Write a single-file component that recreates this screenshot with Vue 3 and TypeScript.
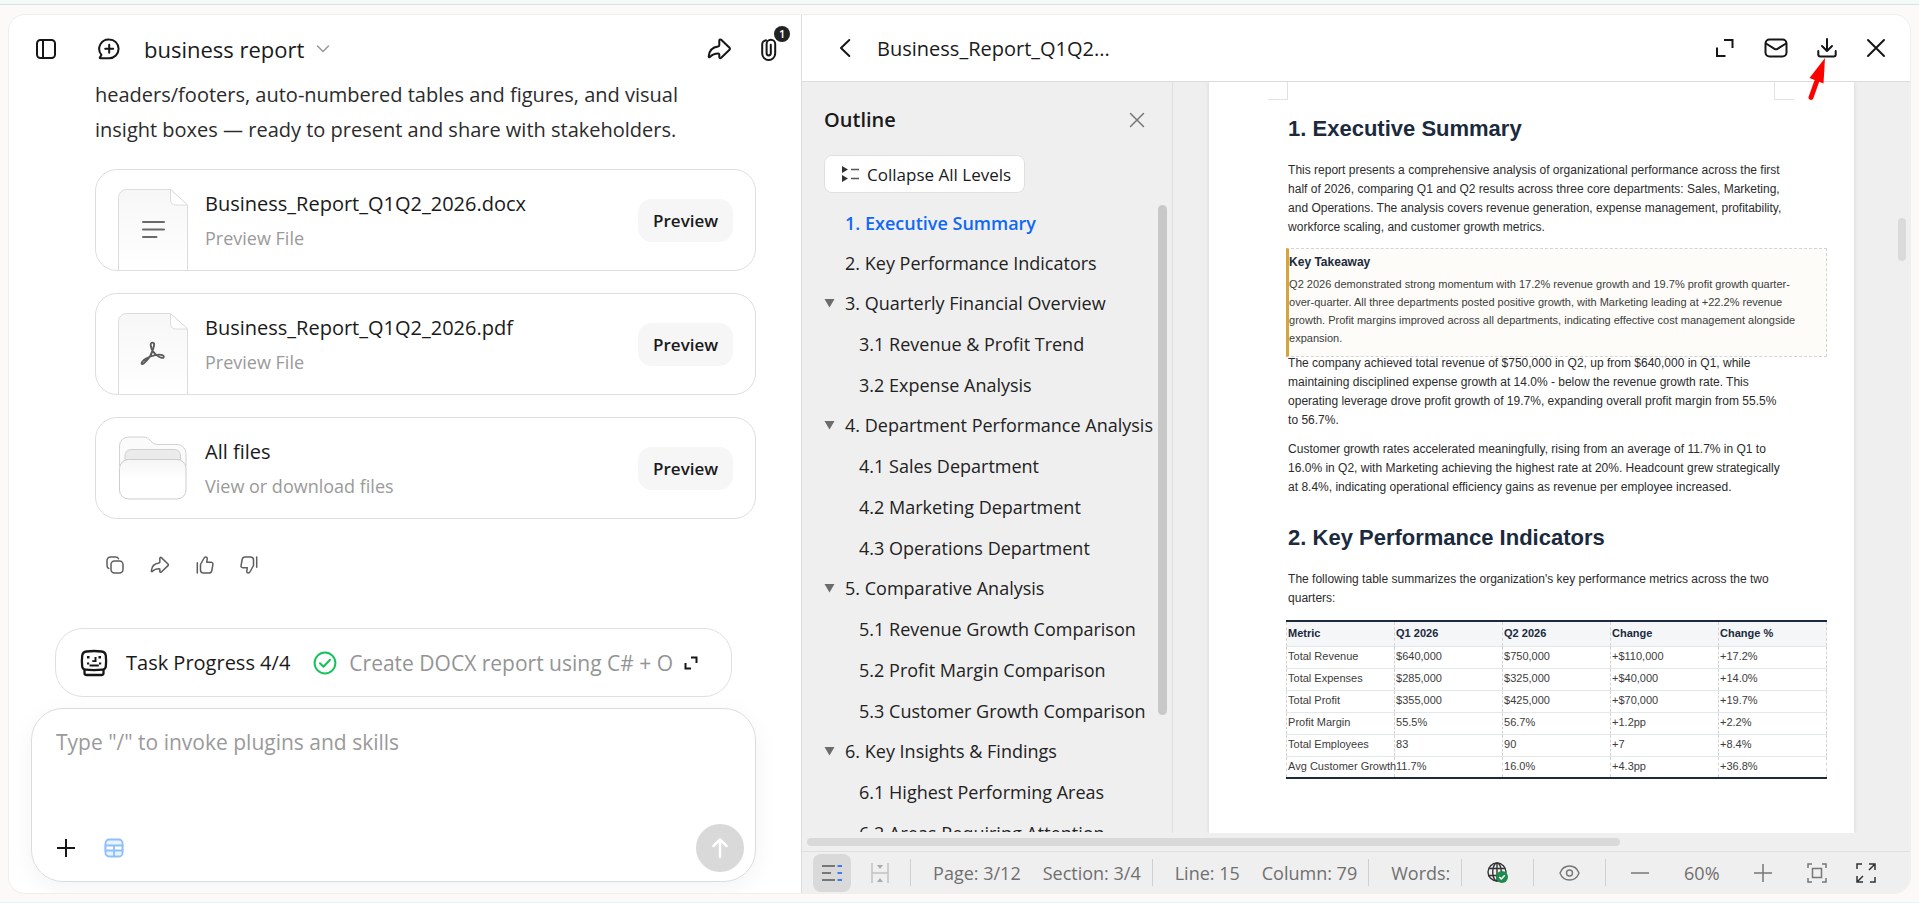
<script setup lang="ts">
import { ref } from 'vue'

interface FileCard {
  kind: 'doc' | 'pdf' | 'folder'
  name: string
  note: string
}

interface OutlineItem {
  label: string
  level: 1 | 2
  parent?: boolean
}

const files: FileCard[] = [
  { kind: 'doc', name: 'Business_Report_Q1Q2_2026.docx', note: 'Preview File' },
  { kind: 'pdf', name: 'Business_Report_Q1Q2_2026.pdf', note: 'Preview File' },
  { kind: 'folder', name: 'All files', note: 'View or download files' },
]

const outline: OutlineItem[] = [
  { label: '1. Executive Summary', level: 1 },
  { label: '2. Key Performance Indicators', level: 1 },
  { label: '3. Quarterly Financial Overview', level: 1, parent: true },
  { label: '3.1 Revenue & Profit Trend', level: 2 },
  { label: '3.2 Expense Analysis', level: 2 },
  { label: '4. Department Performance Analysis', level: 1, parent: true },
  { label: '4.1 Sales Department', level: 2 },
  { label: '4.2 Marketing Department', level: 2 },
  { label: '4.3 Operations Department', level: 2 },
  { label: '5. Comparative Analysis', level: 1, parent: true },
  { label: '5.1 Revenue Growth Comparison', level: 2 },
  { label: '5.2 Profit Margin Comparison', level: 2 },
  { label: '5.3 Customer Growth Comparison', level: 2 },
  { label: '6. Key Insights & Findings', level: 1, parent: true },
  { label: '6.1 Highest Performing Areas', level: 2 },
  { label: '6.2 Areas Requiring Attention', level: 2 },
]
const active = ref(0)
const prompt = ref('')

const introLines = [
  'This report presents a comprehensive analysis of organizational performance across the first',
  'half of 2026, comparing Q1 and Q2 results across three core departments: Sales, Marketing,',
  'and Operations. The analysis covers revenue generation, expense management, profitability,',
  'workforce scaling, and customer growth metrics.',
]
const takeawayLines = [
  'Q2 2026 demonstrated strong momentum with 17.2% revenue growth and 19.7% profit growth quarter-',
  'over-quarter. All three departments posted positive growth, with Marketing leading at +22.2% revenue',
  'growth. Profit margins improved across all departments, indicating effective cost management alongside',
  'expansion.',
]
const companyLines = [
  'The company achieved total revenue of $750,000 in Q2, up from $640,000 in Q1, while',
  'maintaining disciplined expense growth at 14.0% - below the revenue growth rate. This',
  'operating leverage drove profit growth of 19.7%, expanding overall profit margin from 55.5%',
  'to 56.7%.',
]
const customerLines = [
  'Customer growth rates accelerated meaningfully, rising from an average of 11.7% in Q1 to',
  '16.0% in Q2, with Marketing achieving the highest rate at 20%. Headcount grew strategically',
  'at 8.4%, indicating operational efficiency gains as revenue per employee increased.',
]
const tableLines = [
  "The following table summarizes the organization's key performance metrics across the two",
  'quarters:',
]
const columns = ['Metric', 'Q1 2026', 'Q2 2026', 'Change', 'Change %']
const rows = [
  ['Total Revenue', '$640,000', '$750,000', '+$110,000', '+17.2%'],
  ['Total Expenses', '$285,000', '$325,000', '+$40,000', '+14.0%'],
  ['Total Profit', '$355,000', '$425,000', '+$70,000', '+19.7%'],
  ['Profit Margin', '55.5%', '56.7%', '+1.2pp', '+2.2%'],
  ['Total Employees', '83', '90', '+7', '+8.4%'],
  ['Avg Customer Growth', '11.7%', '16.0%', '+4.3pp', '+36.8%'],
]
</script>

<template>
  <div class="shell">
    <div class="window">
      <section class="chat">
        <header class="chat-head">
          <button class="icon" aria-label="Toggle sidebar">
            <svg width="22" height="22" viewBox="0 0 22 22" class="line"><rect x="2" y="2" width="18" height="18" rx="3.5" /><path d="M8 2v18" /></svg>
          </button>
          <button class="icon new-chat" aria-label="New chat">
            <svg width="24" height="24" viewBox="0 0 24 24" class="line"><path d="M12.2 2.4a9.4 9.4 0 1 1 0 18.8H3.4c-.7 0-.8-.6-.4-1l1.2-1.7c.3-.4.2-.6 0-1A9.4 9.4 0 0 1 12.2 2.4z" /><path d="M12.2 7.8v8M8.2 11.8h8" /></svg>
          </button>
          <button class="title">
            business report
            <svg width="14" height="10" viewBox="0 0 14 10" class="line faint"><path d="M1.5 2l5.5 5.5L12.500 2" /></svg>
          </button>
          <span class="spacer"></span>
          <button class="icon" aria-label="Share">
            <svg width="25" height="22" viewBox="0 0 25 22" class="line"><path d="M14.200 1.800l8.300 8a1.400 1.400 0 0 1 0 2l-8.300 8c-.8.7-1.900.4-1.900-.7v-2.500c0-.7-.3-1-1-1-3.200 0-5.600.4-8.200 3.300-.7.8-1.500.5-1.400-.6.5-6 3.700-9.200 9.400-9.900.8-.1 1.200-.5 1.200-1.200V2.500c0-1 1.100-1.400 1.900-.7z" /></svg>
          </button>
          <button class="icon clip" aria-label="Attachments">
            <svg width="18" height="23" viewBox="0 0 18 23" class="line"><path d="M2.200 7v8.500a6.500 6.500 0 0 0 13 0V6a4.300 4.300 0 0 0-8.600 0v9.300a2.100 2.100 0 0 0 4.200 0V6.800M2.200 7a4.500 4.500 0 0 1 3.800-4.800" /></svg>
            <span class="badge">1</span>
          </button>
        </header>

        <div class="thread">
          <p class="message">headers/footers, auto-numbered tables and figures, and visual<br />insight boxes — ready to present and share with stakeholders.</p>

          <article v-for="file in files" :key="file.name" class="card">
            <div class="thumb" :class="{ folder: file.kind === 'folder' }">
              <svg v-if="file.kind !== 'folder'" width="70" height="81" viewBox="0 0 70 81">
                <defs>
                  <linearGradient :id="'sheet-' + file.kind" x1="0" y1="0" x2="0" y2="1"><stop offset="0" stop-color="#f7f7f7" /><stop offset="1" stop-color="#fff" /></linearGradient>
                </defs>
                <path d="M.5 84V8.500a8 8 0 0 1 8-8h44L69.500 16V84" :fill="'url(#sheet-' + file.kind + ')'" stroke="#dcdcdc" />
                <path d="M52.500.5V11a5 5 0 0 0 5 5h12z" fill="#fff" stroke="#dcdcdc" />
                <g v-if="file.kind === 'doc'" fill="none" stroke="#6a6a6a" stroke-width="2" stroke-linecap="round"><path d="M25 33h21M25 40.500h21M25 48h13.500" /></g>
                <path v-else fill="none" stroke="#5c5c5c" stroke-width="1.900" d="M32.500 42.500c1.600-3.600 3.200-7.500 3.600-10.500.4-3.200-3.700-3.200-3.400.1.400 4.200 3.700 9.200 8.700 11.900 4.300 2.200 5.800-.8 2.900-1.900-3.300-1.200-10.300.1-16.200 3.500-6 3.600-5.200 7.100-2.200 4.600 2.200-1.900 4.700-4.300 6.600-7.700z" />
              </svg>
              <svg v-else width="70" height="64" viewBox="0 0 70 64">
                <defs>
                  <linearGradient id="front" x1="0" y1="0" x2="0" y2="1"><stop offset="0" stop-color="#f5f5f5" /><stop offset=".5" stop-color="#fff" /></linearGradient>
                </defs>
                <path d="M1.500 30V10a9 9 0 0 1 9-9h15c3 0 4.500 1 6.500 3l2 2c2 2 3.500 2.500 6 2.500h19a9 9 0 0 1 9 9V30z" fill="#fbfbfb" stroke="#d2d2d2" />
                <path d="M7 24v-4c0-4 2.500-6.500 6.500-6.500h42.500c4 0 6.500 2.500 6.500 6.500v4z" fill="#ebebeb" stroke="#d0d0d0" />
                <rect x="1.500" y="23.500" width="66.500" height="39.500" rx="9" fill="url(#front)" stroke="#cdcdcd" />
              </svg>
            </div>
            <div class="file">
              <h3>{{ file.name }}</h3>
              <p>{{ file.note }}</p>
            </div>
            <button class="preview">Preview</button>
          </article>

          <div class="actions">
            <button class="icon" aria-label="Copy"><svg width="18" height="18" viewBox="0 0 18 18" class="line soft"><rect x="5" y="5" width="12" height="12" rx="3.500" /><path d="M2.800 12.500C1.700 12 1 11 1 9.800V4.500A3.500 3.500 0 0 1 4.500 1h5.300c1.300 0 2.300.7 2.700 1.700" /></svg></button>
            <button class="icon" aria-label="Share reply"><svg width="20" height="18" viewBox="0 0 25 22" class="line soft"><path stroke-width="1.900" d="M14.200 1.800l8.300 8a1.400 1.400 0 0 1 0 2l-8.300 8c-.8.7-1.900.4-1.900-.7v-2.500c0-.7-.3-1-1-1-3.200 0-5.600.4-8.200 3.300-.7.8-1.500.5-1.400-.6.5-6 3.700-9.200 9.400-9.900.8-.1 1.200-.5 1.200-1.200V2.500c0-1 1.100-1.400 1.900-.7z" /></svg></button>
            <button class="icon" aria-label="Like"><svg width="18" height="18" viewBox="0 0 18 18" class="line soft"><path d="M1.300 6.800V17M4.500 8.500l3.300-6C8.300 1.400 9 1 9.700 1c1.300 0 1.700 1 1.500 2.200l-.5 3h4.200c1.500 0 2.300 1 2 2.500l-1.100 5.800c-.3 1.600-1.200 2.500-2.700 2.500H7.500c-2 0-3-1-3-3z" /></svg></button>
            <button class="icon" aria-label="Dislike"><svg width="18" height="18" viewBox="0 0 18 18" class="line soft"><path d="M16.700 11.200V1M13.500 9.500l-3.300 6c-.5 1.100-1.200 1.500-1.900 1.500-1.300 0-1.700-1-1.500-2.200l.5-3H3.100c-1.500 0-2.300-1-2-2.500l1.100-5.800C2.500 1.900 3.400 1 4.900 1h5.600c2 0 3 1 3 3z" /></svg></button>
          </div>
        </div>

        <div class="composer">
          <div class="progress">
            <svg width="28" height="28" viewBox="0 0 28 28"><g fill="none" stroke="#161616" stroke-width="2.300" stroke-linejoin="round"><path d="M6.500 2.500q7.500-1 15 0c2.700.3 4 1.500 4.300 4.200q.7 6 0 11c-.3 2-1.300 2.800-3.300 3q-8.500.8-17 0c-2-.2-3-1-3.300-3q-.7-5 0-11c.3-2.700 1.600-3.900 4.300-4.200z" /><path d="M4.500 21v3c0 1.300.7 2 2 2h15c1.300 0 2-.7 2-2v-3" /></g><path fill="#161616" d="M7 7h2.500v2.500H7zM18.500 7H21v2.500h-2.500zM14.500 8h2v5h-4.200v-1.800h2.200zM7 13.500h2.200v2H7zM19 13.500h2.200v2H19zM9.500 15.500h9.300v2H9.500z" /></svg>
            <strong>Task Progress 4/4</strong>
            <svg width="24" height="24" viewBox="0 0 24 24" fill="none" stroke="#16c25c" stroke-width="2" stroke-linecap="round" stroke-linejoin="round"><circle cx="12" cy="12" r="10.400" /><path d="M7 12.300l3.500 3.500 6.500-7" /></svg>
            <span class="step">Create DOCX report using C# + O</span>
            <button class="icon" aria-label="Expand progress"><svg width="14" height="14" viewBox="0 0 14 14" class="line square"><path d="M7 1.500h5.500V7M1.500 7v5.500H7" /></svg></button>
          </div>
          <form class="box" @submit.prevent>
            <textarea v-model="prompt" aria-label="Message" placeholder="Type &quot;/&quot; to invoke plugins and skills"></textarea>
            <div class="tools">
              <button type="button" class="icon" aria-label="Add"><svg width="20" height="20" viewBox="0 0 20 20" class="line square"><path d="M10 1v18M1 10h18" /></svg></button>
              <button type="button" class="icon" aria-label="Sheets"><svg width="20" height="20" viewBox="0 0 20 20" fill="none" stroke="#8cbffb" stroke-width="1.800"><rect x="1.500" y="1.500" width="17" height="17" rx="3.500" fill="#e9f3ff" /><path fill="#fff" d="M1.500 7.500h17v5h-17z" /><path d="M10 7.500v11" /></svg></button>
              <span class="spacer"></span>
              <button class="send" aria-label="Send"><svg width="20" height="22" viewBox="0 0 20 22" fill="none" stroke="#fff" stroke-width="2.500" stroke-linecap="round" stroke-linejoin="round"><path d="M10 20V3M3.500 9L10 2.500 16.500 9" /></svg></button>
            </div>
          </form>
        </div>
      </section>

      <section class="viewer">
        <header class="view-head">
          <button class="icon" aria-label="Back"><svg width="12" height="20" viewBox="0 0 12 20" class="line"><path d="M10.300 2L2 10l8.300 8" /></svg></button>
          <h2>Business_Report_Q1Q2...</h2>
          <div class="view-actions">
            <button class="icon" aria-label="Expand"><svg width="20" height="20" viewBox="0 0 20 20" class="line square"><path d="M9 2h8.500v8M2 9.500V18h8.500" /></svg></button>
            <button class="icon" aria-label="Mail"><svg width="24" height="20" viewBox="0 0 24 20" class="line"><rect x="1.500" y="1.500" width="21" height="17" rx="4" /><path d="M2 5.500l8.500 5.300c1 .6 2 .6 3 0L22 5.500" /></svg></button>
            <button class="icon pointed" aria-label="Download">
              <svg width="20" height="22" viewBox="0 0 20 22" class="line"><path d="M10 2v11M5 9l5 5 5-5M1.300 14v3.500c0 1.400.8 2 2 2h13.400c1.200 0 2-.6 2-2V14" /></svg>
              <svg class="pointer" width="18" height="44" viewBox="0 0 18 44"><path d="M3 40.500L8.500 25" stroke="red" stroke-width="5" stroke-linecap="round" /><path d="M17 1L15.500 26.500 1.500 21z" fill="red" /></svg>
            </button>
            <button class="icon" aria-label="Close viewer"><svg width="20" height="20" viewBox="0 0 20 20" class="line"><path d="M2 2l16 16M18 2L2 18" /></svg></button>
          </div>
        </header>

        <div class="body">
          <aside class="outline">
            <div class="outline-head">
              <h2>Outline</h2>
              <button class="icon" aria-label="Close outline"><svg width="16" height="16" viewBox="0 0 16 16" class="line gray"><path d="M1.500 1.500l13 13M14.500 1.500l-13 13" /></svg></button>
            </div>
            <button class="collapse">
              <svg width="18" height="18" viewBox="0 0 18 18"><path d="M1 1l6 3.500L1 8zM1 10l6 3.500L1 17z" fill="#333" /><path d="M10 4.500h8M10 13.500h8" stroke="#555" stroke-width="1.500" /></svg>
              Collapse All Levels
            </button>
            <nav class="tree">
              <a v-for="(item, i) in outline" :key="item.label" href="#" :class="['level-' + item.level, { active: i === active }]" @click.prevent="active = i">
                <svg v-if="item.parent" width="11" height="10" viewBox="0 0 11 10"><path d="M.5 1h10L5.500 9.500z" fill="#6c6c6c" /></svg>
                {{ item.label }}
              </a>
            </nav>
            <span class="thumb-v"></span>
          </aside>

          <main class="canvas">
            <article class="page">
              <div class="margins"><span></span><span></span></div>
              <h1>1. Executive Summary</h1>
              <p><template v-for="line in introLines" :key="line">{{ line }}<br /></template></p>
              <div class="takeaway">
                <h4>Key Takeaway</h4>
                <p><template v-for="line in takeawayLines" :key="line">{{ line }}<br /></template></p>
              </div>
              <p><template v-for="line in companyLines" :key="line">{{ line }}<br /></template></p>
              <p class="next"><template v-for="line in customerLines" :key="line">{{ line }}<br /></template></p>
              <h1 class="second">2. Key Performance Indicators</h1>
              <p><template v-for="line in tableLines" :key="line">{{ line }}<br /></template></p>
              <table>
                <thead><tr><th v-for="c in columns" :key="c" scope="col">{{ c }}</th></tr></thead>
                <tbody><tr v-for="r in rows" :key="r[0]"><td v-for="c in r" :key="c">{{ c }}</td></tr></tbody>
              </table>
            </article>
            <span class="thumb-page"></span>
          </main>
        </div>

        <div class="h-track"><span></span></div>

        <footer class="status">
          <div class="group tools-left">
            <button class="icon toggle" aria-label="Outline view"><svg width="20" height="18" viewBox="0 0 20 18" fill="none" stroke-width="2"><path stroke="#777" d="M0 2h13M0 9h9M0 16h13" /><path stroke="#3c7ef0" d="M15.500 2H20M15.500 9H20M15.500 16H20" /></svg></button>
            <button class="icon" aria-label="Page gap"><svg width="18" height="20" viewBox="0 0 18 20"><path d="M1 0v20M17 0v20M1 10h16" fill="none" stroke="#c2c2c2" stroke-width="1.500" /><path d="M6 2h6L9 6zM6 19h6l-3-4z" fill="#aaa" /></svg></button>
          </div>
          <div class="group"><span>Page: 3/12</span><span>Section: 3/4</span></div>
          <div class="group"><span>Line: 15</span><span>Column: 79</span></div>
          <div class="group"><span>Words:</span></div>
          <div class="group center">
            <button class="icon" aria-label="Proofing"><svg width="21" height="21" viewBox="0 0 21 21"><g fill="none" stroke="#333" stroke-width="1.400"><circle cx="10" cy="10" r="9" /><ellipse cx="10" cy="10" rx="4.300" ry="9" /><path d="M2 6.500h16M1 13.500h17M10 1v18" /></g><circle cx="15" cy="15" r="6" fill="#1f8a50" /><path d="M12.300 15l2 2 3.500-3.800" fill="none" stroke="#fff" stroke-width="1.500" /></svg></button>
          </div>
          <div class="group center">
            <button class="icon" aria-label="Reading mode"><svg width="21" height="16" viewBox="0 0 21 16" fill="none" stroke="#777" stroke-width="1.400"><path d="M1 8c1.500-4 5-7 9.500-7S18.500 4 20 8c-1.500 4-5 7-9.500 7S2.500 12 1 8z" /><circle cx="10.500" cy="8" r="3" /></svg></button>
          </div>
          <div class="group zoom">
            <button class="icon" aria-label="Zoom out"><svg width="18" height="18" viewBox="0 0 18 18" class="line gray"><path d="M0 9h18" /></svg></button>
            <span>60%</span>
            <button class="icon" aria-label="Zoom in"><svg width="18" height="18" viewBox="0 0 18 18" class="line gray"><path d="M0 9h18M9 0v18" /></svg></button>
            <div class="fit">
              <button class="icon" aria-label="Fit page"><svg width="20" height="20" viewBox="0 0 20 20" class="line gray square"><path d="M1 5V1h4M15 1h4v4M19 15v4h-4M5 19H1v-4" /><rect x="5.500" y="5.500" width="9" height="9" /></svg></button>
              <button class="icon" aria-label="Full screen"><svg width="20" height="20" viewBox="0 0 20 20" class="line dim square"><path d="M1 6V1h5M13 1h6v6M19 1l-6 6M19 14v5h-5M7 19H1v-6M1 19l6-6" /></svg></button>
            </div>
          </div>
        </footer>
      </section>
    </div>
  </div>
</template>

<style>
body {
  margin: 0;
}
</style>

<style scoped>
* {
  box-sizing: border-box;
}
.shell {
  height: 100vh;
  padding: 10px 8px 8px;
  border-top: 4px solid #f4faf8;
  border-bottom: 1px solid #e3f3f3;
  background: linear-gradient(#d3e5e0, #d3e5e0) top / 100% 1px no-repeat #fbfaf8;
  font-family: "Segoe UI", "Open Sans", "Noto Sans", sans-serif;
  font-size: 20px;
  color: #1a1a1a;
}
.window {
  display: grid;
  grid-template-columns: 5fr 7fr;
  height: 100%;
  overflow: hidden;
  border: 1px solid #f0efed;
  border-radius: 17px;
  background: #fff;
}
h1, h2, h3, h4, p {
  margin: 0;
  font-weight: 400;
}
button {
  padding: 0;
  border: 0;
  background: none;
  font: inherit;
  color: inherit;
  cursor: pointer;
}
.icon {
  display: flex;
  flex: none;
}
svg {
  display: block;
  flex: none;
}
.line {
  fill: none;
  stroke: #161616;
  stroke-width: 2;
  stroke-linecap: round;
  stroke-linejoin: round;
}
.square {
  stroke-linecap: butt;
  stroke-linejoin: miter;
}
.faint {
  stroke: #999;
  stroke-width: 1.5;
}
.soft {
  stroke: #5e5e5e;
  stroke-width: 1.5;
}
.gray {
  stroke: #777;
  stroke-width: 1.5;
}
.dim {
  stroke: #333;
  stroke-width: 1.5;
}
.spacer {
  flex: 1;
}

/* Conversation column */
.chat {
  display: flex;
  flex-direction: column;
  min-width: 0;
  min-height: 0;
}
.chat-head {
  display: flex;
  flex: none;
  align-items: center;
  height: 62px;
  padding: 6px 23px 0 26px;
}
.new-chat {
  margin: 0 23px 0 40px;
}
.title {
  display: flex;
  align-items: center;
  gap: 12px;
  font-size: 22px;
  line-height: 30px;
}
.clip {
  position: relative;
  margin-left: 28px;
}
.badge {
  position: absolute;
  top: -12px;
  left: 14px;
  width: 16px;
  height: 16px;
  border-radius: 8px;
  background: #222;
  color: #fff;
  font-size: 11px;
  font-weight: 600;
  line-height: 16px;
  text-align: center;
}
.thread {
  display: flex;
  flex: 1;
  flex-direction: column;
  gap: 22px;
  min-height: 0;
  overflow: hidden;
  padding: 0 45px 0 86px;
}
.message {
  line-height: 35px;
  color: #2b2b2b;
}
.card {
  display: flex;
  flex: none;
  align-items: center;
  height: 102px;
  padding: 0 22px;
  border: 1px solid #dedede;
  border-radius: 22px;
}
.thumb {
  align-self: flex-end;
  margin-right: 17px;
}
.folder {
  align-self: center;
}
.file {
  flex: 1;
}
.file h3 {
  font-size: 20px;
  line-height: 30px;
}
.file p {
  margin-top: 6px;
  font-size: 18px;
  line-height: 26px;
  color: #9a9a9a;
}
.preview {
  width: 95px;
  height: 43px;
  border-radius: 14px;
  background: #f6f6f6;
  font-size: 17px;
  font-weight: 600;
}
.actions {
  display: flex;
  gap: 26px;
  padding: 15px 11px;
}
.composer {
  padding: 0 45px 11px 22px;
}
.progress {
  display: flex;
  align-items: center;
  height: 69px;
  margin: 0 24px 11px;
  padding: 0 33px 0 24px;
  border: 1px solid #e0e0e0;
  border-radius: 28px;
}
.progress strong {
  margin: 0 23px 0 18px;
  font-weight: 400;
  white-space: nowrap;
}
.step {
  flex: 1;
  margin: 0 8px 0 12px;
  font-size: 21px;
  color: #949494;
  white-space: nowrap;
}
.box {
  display: flex;
  flex-direction: column;
  height: 174px;
  padding: 16px 11px 9px 24px;
  border: 1px solid #dcdcdc;
  border-radius: 32px;
  box-shadow: 0 6px 24px rgba(0, 0, 0, 0.05);
}
textarea {
  flex: 1;
  padding: 0;
  border: 0;
  outline: 0;
  resize: none;
  background: transparent;
  font: inherit;
  font-size: 21px;
  line-height: 34px;
}
textarea::placeholder {
  color: #9a9a9a;
}
.tools {
  display: flex;
  align-items: center;
  gap: 28px;
}
.send {
  display: grid;
  place-items: center;
  width: 48px;
  height: 48px;
  border-radius: 24px;
  background: #d9d9d9;
}

/* Document viewer */
.viewer {
  display: flex;
  flex-direction: column;
  min-width: 0;
  min-height: 0;
  border-left: 1px solid #dcdcdc;
  background: #efefef;
}
.view-head {
  display: flex;
  flex: none;
  align-items: center;
  height: 67px;
  padding: 0 24px 0 37px;
  border-bottom: 1px solid #dcdcdc;
  background: #fff;
}
.view-head h2 {
  flex: 1;
  margin-left: 26px;
  font-size: 20px;
}
.view-actions {
  display: flex;
  align-items: center;
  gap: 29px;
}
.pointed {
  position: relative;
  z-index: 1;
}
.pointer {
  position: absolute;
  top: 20px;
  left: -9px;
}
.body {
  display: flex;
  flex: 1;
  min-height: 0;
}
.outline {
  position: relative;
  display: flex;
  flex: none;
  flex-direction: column;
  align-items: flex-start;
  width: 371px;
  padding-left: 22px;
  border-right: 1px solid #dfdfdf;
}
.outline-head {
  display: flex;
  flex: none;
  align-items: center;
  justify-content: space-between;
  width: 100%;
  height: 73px;
  padding: 2px 27px 0 0;
}
.outline-head h2 {
  font-size: 20px;
  font-weight: 600;
}
.collapse {
  display: flex;
  flex: none;
  align-items: center;
  gap: 8px;
  height: 38px;
  padding: 0 13px 0 16px;
  border: 1px solid #e0e0e0;
  border-radius: 8px;
  background: #fff;
  font-size: 17px;
  white-space: nowrap;
}
.tree {
  flex: 1;
  min-height: 0;
  overflow: hidden;
  margin: 10px 0 1px;
}
.tree a {
  display: flex;
  align-items: center;
  height: 40px;
  padding-left: 21px;
  color: #222;
  font-size: 18px;
  text-decoration: none;
  white-space: nowrap;
}
.tree a svg {
  margin: 0 10px 0 -21px;
}
.tree .level-2 {
  height: 41px;
  padding-left: 35px;
}
.tree .active {
  color: #0f68f5;
  font-weight: 600;
}
.thumb-v {
  position: absolute;
  top: 123px;
  right: 5px;
  width: 9px;
  height: 510px;
  border-radius: 5px;
  background: #c8c8c8;
}
.canvas {
  position: relative;
  display: flex;
  flex: 1;
  min-width: 0;
  overflow: hidden;
}
.thumb-page {
  position: absolute;
  top: 136px;
  right: 4px;
  width: 8px;
  height: 43px;
  border-radius: 4px;
  background: #dadada;
}
.page {
  flex: 1;
  min-width: 0;
  margin: 0 56px 0 36px;
  padding: 0 27px 0 77px;
  background: #fff;
  box-shadow: 0 0 4px rgba(0, 0, 0, 0.12);
  font-family: Arial, "Liberation Sans", sans-serif;
  font-size: 12px;
  line-height: 19px;
  color: #2b2b2b;
  white-space: nowrap;
}
.margins {
  display: flex;
  justify-content: space-between;
  margin: 0 33px 0 -18px;
}
.margins span {
  width: 20px;
  height: 18px;
  border: solid #e2e2e2;
  border-width: 0 1px 1px 0;
}
.margins span + span {
  border-width: 0 0 1px 1px;
}
.page h1 {
  margin: 13px 0 16px 2px;
  font-size: 22px;
  font-weight: 700;
  line-height: 32px;
  color: #1b2a3d;
}
.page > p {
  padding-left: 2px;
}
.takeaway {
  height: 109px;
  margin: 11px 0 -3px;
  padding-top: 4px;
  border: 1px dashed #d4d4d4;
  border-left: 3px solid #d4a53c;
  background: #fdfcf8;
}
.takeaway h4 {
  margin-bottom: 4px;
  font-size: 12px;
  font-weight: 700;
  line-height: 18px;
  color: #1b2a3d;
}
.takeaway p {
  font-size: 11px;
  line-height: 18px;
  color: #3c3c3c;
}
.page .next {
  margin-top: 10px;
}
.page .second {
  margin-top: 25px;
}
table {
  width: 100%;
  margin-top: 12px;
  border-collapse: collapse;
  border-top: 2px solid #1b2a3d;
  border-bottom: 2px solid #1b2a3d;
  table-layout: fixed;
  font-size: 11px;
  line-height: 14px;
  color: #3c3c3c;
}
th, td {
  height: 22px;
  padding: 0 0 2px 1px;
  border: 1px dashed #d4d4d4;
  border-top: 1px solid #e3e8ea;
  border-bottom: 1px solid #e3e8ea;
  text-align: left;
}
th {
  height: 25px;
  border-top: 2px solid #1b2a3d;
  background: #f4f6f8;
  color: #1b2a3d;
}
tr:last-child td {
  border-bottom: 2px solid #1b2a3d;
}
.h-track {
  flex: none;
  height: 18px;
  padding: 5px 5px 0;
}
.h-track span {
  display: block;
  width: 74%;
  height: 8px;
  border-radius: 4px;
  background: #d9d9d9;
}
.status {
  display: flex;
  flex: none;
  align-items: center;
  height: 42px;
  border-top: 1px solid #dfdfdf;
  color: #707070;
  font-size: 18px;
  white-space: nowrap;
}
.group {
  display: flex;
  align-items: center;
  gap: 22px;
  height: 27px;
  padding: 0 11px 0 22px;
  border-right: 1px solid #d0d0d0;
}
.tools-left {
  gap: 20px;
  padding: 0 21px 0 11px;
}
.toggle {
  align-items: center;
  justify-content: center;
  width: 38px;
  height: 38px;
  border-radius: 8px;
  background: #d9d9d9;
}
.center {
  padding: 0 25px;
}
.zoom {
  flex: 1;
  justify-content: space-between;
  padding: 0 34px 0 25px;
  border: 0;
}
.fit {
  display: flex;
  gap: 29px;
}
</style>
